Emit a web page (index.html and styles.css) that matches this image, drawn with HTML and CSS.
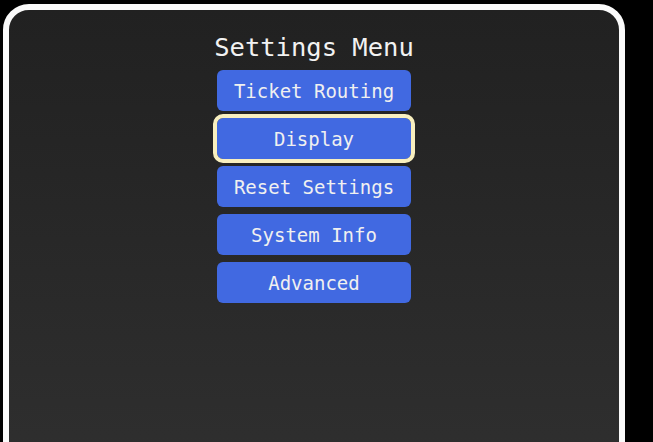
FILE: index.html
```html
<!DOCTYPE html>
<html>
<head>
<meta charset="utf-8">
<link rel="stylesheet" href="styles.css">
</head>
<body>
<div class="panel">
  <h1 class="title">Settings Menu</h1>
  <div class="menu">
    <button class="item">Ticket Routing</button>
    <button class="item selected">Display</button>
    <button class="item">Reset Settings</button>
    <button class="item">System Info</button>
    <button class="item">Advanced</button>
  </div>
</div>
</body>
</html>
```
FILE: styles.css
```css
html, body {
  margin: 0;
  padding: 0;
  background: #000;
  height: 100%;
  overflow: hidden;
}
.panel {
  box-sizing: border-box;
  margin: 4px 0 0 3px;
  width: 622px;
  height: 470px;
  border: 6px solid #fafafa;
  border-radius: 26px;
  background: linear-gradient(to bottom, #212121 0%, #2f2f2f 100%);
  display: flex;
  flex-direction: column;
  align-items: center;
  padding-top: 23px;
  font-family: "DejaVu Sans Mono", monospace;
}
.title {
  margin: 0;
  font-size: 25.5px;
  font-weight: normal;
  line-height: 29px;
  color: #f2f2f2;
}
.menu {
  margin-top: 8px;
  display: flex;
  flex-direction: column;
  gap: 7px;
}
.item {
  box-sizing: border-box;
  width: 194px;
  height: 41px;
  border: none;
  border-radius: 6px;
  background: #4169e1;
  color: #f0f0f0;
  font-family: "DejaVu Sans Mono", monospace;
  font-size: 19px;
  padding: 0;
}
.selected {
  outline: 4px solid #f8efbf;
  outline-offset: 0;
}
```
